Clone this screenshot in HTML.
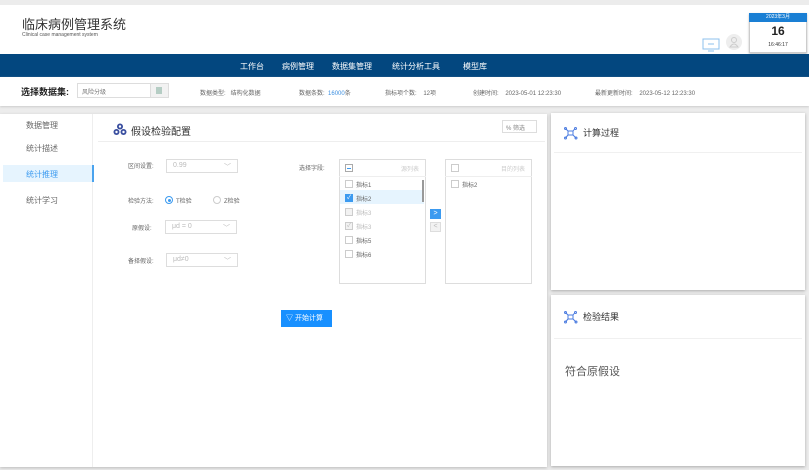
<!DOCTYPE html>
<html><head><meta charset="utf-8">
<style>
*{margin:0;padding:0;box-sizing:border-box}
body{width:809px;height:470px;background:#ececec;font-family:"Liberation Sans","Noto Sans CJK SC",sans-serif;position:relative;overflow:hidden;color:#333}
.a{position:absolute}
.t{font-size:7px;color:#666;white-space:nowrap}
.cb{position:absolute;width:8px;height:8px;border:1px solid #ccc;background:#fff}
.sel{position:absolute;height:14px;border:1px solid #ddd;background:#fff;font-size:7px;color:#bbb;padding:2px 6px}
</style></head><body>
<div class="a" style="left:0;top:5px;width:809px;height:49px;background:#fff"></div>
<div class="a" style="left:22px;top:18px;font-size:13px;line-height:13px;color:#333">临床病例管理系统</div>
<div class="a" style="left:22px;top:33px;font-size:5px;line-height:5px;color:#555">Clinical case management system</div>
<svg class="a" style="left:702px;top:38px" width="18" height="14"><rect x="1" y="1" width="16" height="10" fill="none" stroke="#8ec0ee" stroke-width="1"/><line x1="6" y1="6" x2="12" y2="6" stroke="#8ec0ee"/><line x1="6" y1="13" x2="12" y2="13" stroke="#8ec0ee"/></svg>
<div class="a" style="left:726px;top:34px;width:16px;height:16px;border-radius:50%;background:#eee"></div>
<svg class="a" style="left:729px;top:36px" width="10" height="12"><circle cx="5" cy="4" r="2.5" fill="none" stroke="#ccc"/><path d="M1 11 Q5 5 9 11Z" fill="none" stroke="#ccc"/></svg>
<div class="a" style="left:749px;top:13px;width:58px;height:40px;background:#fff;border:1px solid #ccc;box-shadow:0 1px 2px #bbb"></div>
<div class="a" style="left:749px;top:13px;width:58px;height:9px;background:#1a7fd4;color:#fff;font-size:5px;text-align:center;line-height:9px">2023年3月</div>
<div class="a" style="left:749px;top:24px;width:58px;text-align:center;font-size:12px;font-weight:bold;color:#222">16</div>
<div class="a" style="left:749px;top:42px;width:58px;text-align:center;font-size:5px;color:#333">16:46:17</div>
<div class="a" style="left:0;top:54px;width:809px;height:23px;background:#03477f"></div>
<div class="a" style="left:240px;top:61px;font-size:8px;color:#fff;white-space:nowrap">工作台</div>
<div class="a" style="left:282px;top:61px;font-size:8px;color:#fff">病例管理</div>
<div class="a" style="left:332px;top:61px;font-size:8px;color:#fff">数据集管理</div>
<div class="a" style="left:392px;top:61px;font-size:8px;color:#fff">统计分析工具</div>
<div class="a" style="left:463px;top:61px;font-size:8px;color:#fff">模型库</div>
<div class="a" style="left:0;top:77px;width:809px;height:29px;background:#fff;box-shadow:0 1px 2px #ccc"></div>
<div class="a" style="left:21px;top:85px;font-size:9px;font-weight:bold;color:#222">选择数据集:</div>
<div class="a" style="left:77px;top:83px;width:92px;height:15px;border:1px solid #ddd;background:#fff"></div>
<div class="a" style="left:82px;top:87px;font-size:6px;color:#777">风险分级</div>
<div class="a" style="left:150px;top:84px;width:18px;height:13px;background:#f2f2f2;border-left:1px solid #ddd"></div>
<div class="a" style="left:156px;top:87px;width:6px;height:7px;background:#b5cdc4"></div>
<div class="a t" style="left:200px;top:88px;font-size:6px">数据类型:&nbsp;&nbsp;&nbsp;结构化数据</div>
<div class="a t" style="left:299px;top:88px;font-size:6px">数据条数:&nbsp;&nbsp;<span style="color:#3b8ee0">16000</span>条</div>
<div class="a t" style="left:385px;top:88px;font-size:6px">指标项个数:&nbsp;&nbsp;&nbsp;&nbsp;12项</div>
<div class="a t" style="left:473px;top:88px;font-size:6px">创建时间:&nbsp;&nbsp;&nbsp;&nbsp;2023-05-01 12:23:30</div>
<div class="a t" style="left:595px;top:88px;font-size:6px">最新更新时间:&nbsp;&nbsp;&nbsp;&nbsp;2023-05-12 12:23:30</div>
<div class="a" style="left:0;top:114px;width:547px;height:353px;background:#fff;box-shadow:0 1px 3px #bbb"></div>
<div class="a" style="left:92px;top:114px;width:1px;height:353px;background:#eee"></div>
<div class="a" style="left:26px;top:120px;font-size:8px;color:#666">数据管理</div>
<div class="a" style="left:26px;top:143px;font-size:8px;color:#666">统计描述</div>
<div class="a" style="left:3px;top:165px;width:91px;height:17px;background:#e6f4fe;border-right:2px solid #4aa3ee"></div>
<div class="a" style="left:26px;top:169px;font-size:8px;color:#3b9af0">统计推理</div>
<div class="a" style="left:26px;top:195px;font-size:8px;color:#666">统计学习</div>
<svg class="a" style="left:113px;top:123px" width="14" height="13"><circle cx="7" cy="3.5" r="3" fill="#3a4fa0"/><circle cx="3.5" cy="9" r="3" fill="#3a4fa0"/><circle cx="10.5" cy="9" r="3" fill="#3a4fa0"/><circle cx="7" cy="3.5" r="1.2" fill="#fff"/><circle cx="3.5" cy="9" r="1.2" fill="#fff"/><circle cx="10.5" cy="9" r="1.2" fill="#fff"/></svg>
<div class="a" style="left:131px;top:123px;font-size:10px;color:#333">假设检验配置</div>
<div class="a" style="left:502px;top:120px;width:35px;height:13px;border:1px solid #ddd;font-size:6px;color:#888;padding:2px 3px">% 筛选</div>
<div class="a" style="left:98px;top:141px;width:447px;height:1px;background:#eee"></div>
<div class="a t" style="left:128px;top:161px;font-size:6px">区间设置:</div>
<div class="sel" style="left:166px;top:159px;width:72px">0.99<span style="float:right">﹀</span></div>
<div class="a t" style="left:128px;top:196px;font-size:6px">检验方法:</div>
<div class="a" style="left:165px;top:196px;width:8px;height:8px;border:1px solid #3b9af0;border-radius:50%"></div>
<div class="a" style="left:167.5px;top:198.5px;width:3px;height:3px;background:#3b9af0;border-radius:50%"></div>
<div class="a t" style="left:176px;top:196px;font-size:6px">T检验</div>
<div class="a" style="left:213px;top:196px;width:8px;height:8px;border:1px solid #ccc;border-radius:50%"></div>
<div class="a t" style="left:224px;top:196px;font-size:6px">Z检验</div>
<div class="a t" style="left:132px;top:223px;font-size:6px">原假设:</div>
<div class="sel" style="left:165px;top:220px;width:72px">μd = 0<span style="float:right">﹀</span></div>
<div class="a t" style="left:128px;top:256px;font-size:6px">备择假设:</div>
<div class="sel" style="left:166px;top:253px;width:72px">μd≠0<span style="float:right">﹀</span></div>
<div class="a t" style="left:299px;top:163px;font-size:6px">选择字段:</div>
<div class="a" style="left:339px;top:159px;width:87px;height:125px;border:1px solid #ddd"></div>
<div class="a" style="left:339px;top:176px;width:87px;height:1px;background:#eee"></div>
<div class="cb" style="left:345px;top:164px;border-color:#aaa"></div><div class="a" style="left:347px;top:167.5px;width:4px;height:1px;background:#3b9af0"></div>
<div class="a t" style="left:401px;top:164px;font-size:6px;color:#ccc">源列表</div>
<div class="a" style="left:340px;top:190px;width:84px;height:14px;background:#e6f4fe"></div>
<div class="a" style="left:422px;top:180px;width:2px;height:22px;background:#999"></div>
<div class="cb" style="left:345px;top:180px"></div><div class="a t" style="left:356px;top:180px;font-size:6px">指标1</div>
<div class="cb" style="left:345px;top:194px;background:#3b9af0;border-color:#3b9af0;color:#fff;font-size:6px;line-height:6px;text-align:center">✓</div><div class="a t" style="left:356px;top:194px;font-size:6px">指标2</div>
<div class="cb" style="left:345px;top:208px;background:#f2f2f2"></div><div class="a t" style="left:356px;top:208px;font-size:6px;color:#bbb">指标3</div>
<div class="cb" style="left:345px;top:222px;background:#f2f2f2;color:#bbb;font-size:6px;line-height:6px;text-align:center">✓</div><div class="a t" style="left:356px;top:222px;font-size:6px;color:#bbb">指标3</div>
<div class="cb" style="left:345px;top:236px"></div><div class="a t" style="left:356px;top:236px;font-size:6px">指标5</div>
<div class="cb" style="left:345px;top:250px"></div><div class="a t" style="left:356px;top:250px;font-size:6px">指标6</div>
<div class="a" style="left:430px;top:209px;width:11px;height:10px;background:#3b9af0;color:#fff;font-size:7px;text-align:center;line-height:10px">&gt;</div>
<div class="a" style="left:430px;top:222px;width:11px;height:10px;background:#f2f2f2;border:1px solid #ddd;color:#bbb;font-size:7px;text-align:center;line-height:8px">&lt;</div>
<div class="a" style="left:445px;top:159px;width:87px;height:125px;border:1px solid #ddd"></div>
<div class="a" style="left:445px;top:176px;width:87px;height:1px;background:#eee"></div>
<div class="cb" style="left:451px;top:164px"></div>
<div class="a t" style="left:501px;top:164px;font-size:6px;color:#ccc">目的列表</div>
<div class="cb" style="left:451px;top:180px"></div><div class="a t" style="left:462px;top:180px;font-size:6px">指标2</div>
<div class="a" style="left:281px;top:310px;width:51px;height:17px;background:#1890ff;color:#fff;font-size:7px;line-height:17px;padding-left:5px">▽ 开始计算</div>
<div class="a" style="left:551px;top:113px;width:254px;height:177px;background:#fff;box-shadow:0 1px 3px #aaa"></div>
<div class="a" style="left:554px;top:152px;width:248px;height:1px;background:#f0f0f0"></div>
<svg class="a" style="left:564px;top:127px" width="14" height="13"><g stroke="#4a7be0" fill="none" stroke-width="1"><rect x="4" y="4" width="5" height="4"/><line x1="4" y1="4" x2="1.5" y2="1.5"/><line x1="9" y1="4" x2="11" y2="1.5"/><line x1="4" y1="8" x2="1.5" y2="11"/><line x1="9" y1="8" x2="12" y2="11"/><circle cx="1.5" cy="1.5" r="1"/><circle cx="11.5" cy="1.5" r="1"/><circle cx="1.5" cy="11" r="1"/><circle cx="12" cy="11" r="1"/></g></svg>
<div class="a" style="left:583px;top:126px;font-size:9px;color:#333">计算过程</div>
<div class="a" style="left:551px;top:295px;width:254px;height:171px;background:#fff;box-shadow:0 1px 3px #aaa"></div>
<div class="a" style="left:554px;top:338px;width:248px;height:1px;background:#f0f0f0"></div>
<svg class="a" style="left:564px;top:311px" width="14" height="13"><g stroke="#4a7be0" fill="none" stroke-width="1"><rect x="4" y="4" width="5" height="4"/><line x1="4" y1="4" x2="1.5" y2="1.5"/><line x1="9" y1="4" x2="11" y2="1.5"/><line x1="4" y1="8" x2="1.5" y2="11"/><line x1="9" y1="8" x2="12" y2="11"/><circle cx="1.5" cy="1.5" r="1"/><circle cx="11.5" cy="1.5" r="1"/><circle cx="1.5" cy="11" r="1"/><circle cx="12" cy="11" r="1"/></g></svg>
<div class="a" style="left:583px;top:310px;font-size:9px;color:#333">检验结果</div>
<div class="a" style="left:565px;top:363px;font-size:11px;color:#555">符合原假设</div>
</body></html>
